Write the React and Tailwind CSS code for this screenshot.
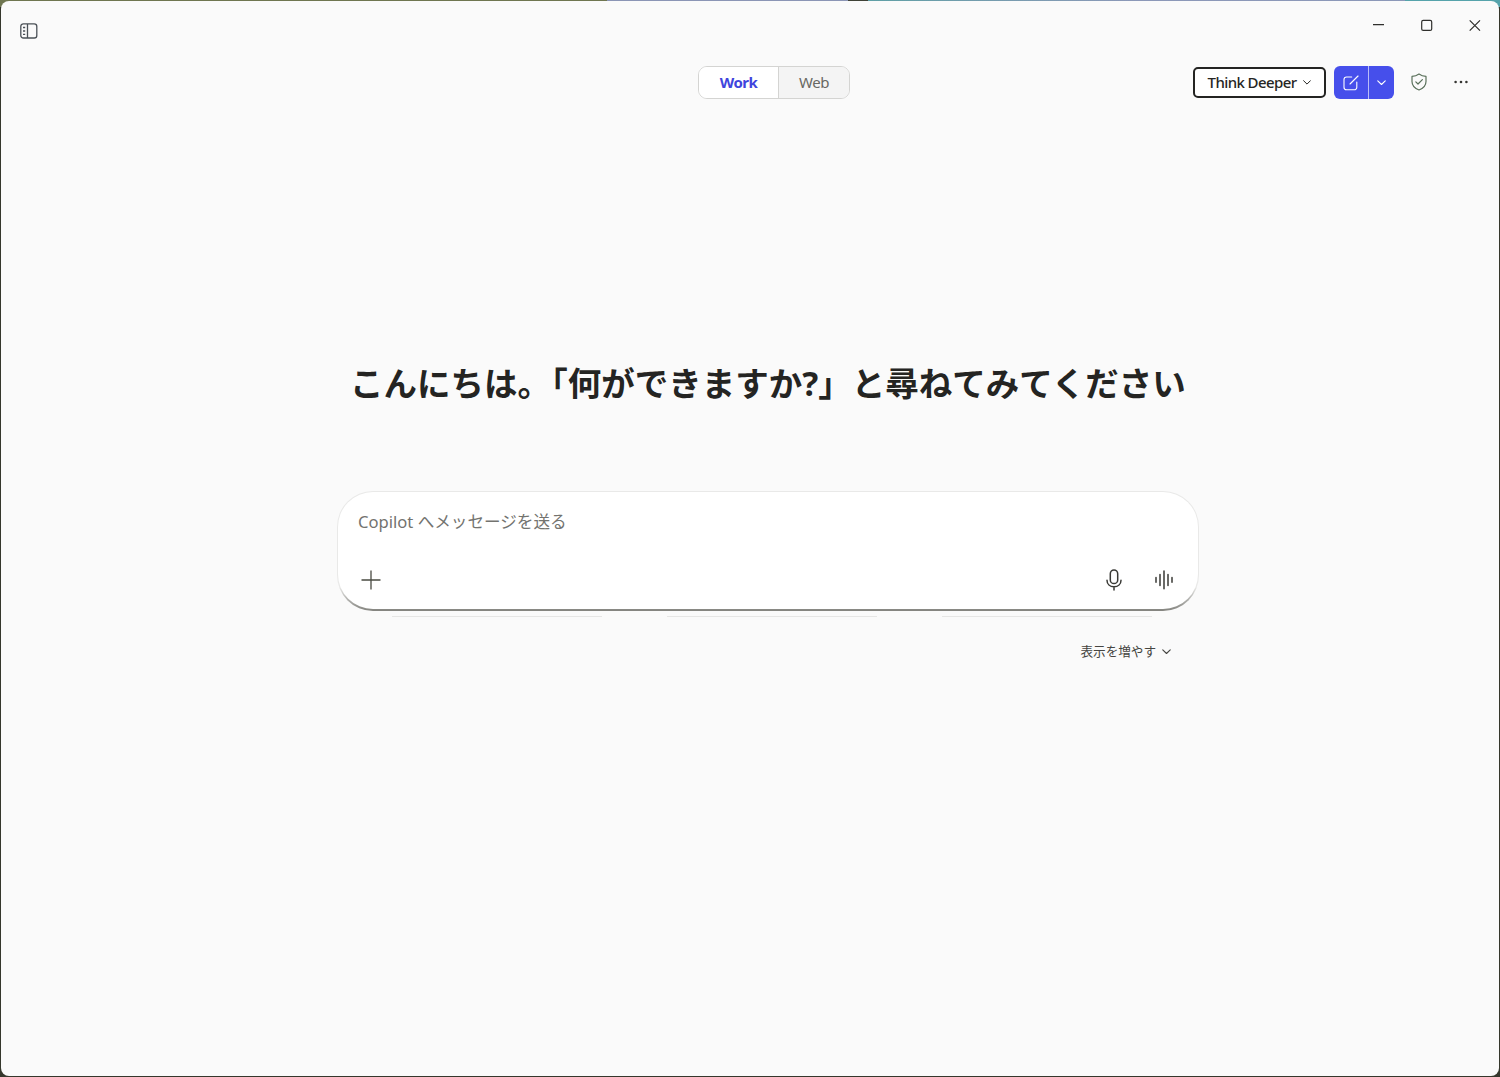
import { useState } from "react";

function SidebarIcon() {
  return (
    <svg width="18" height="16" viewBox="0 0 18 16" fill="none" stroke="#4b5157" strokeWidth="1.3">
      <rect x="0.8" y="0.8" width="16" height="14.2" rx="2.6" />
      <path d="M7.5 1v14" />
      <path d="M3 4.5h2.2M3 8h2.2M3 11.4h2.2" />
    </svg>
  );
}

function ChevronDown({ size = 8 }) {
  return (
    <svg width={size} height={size / 2 + 1} viewBox="0 0 8 5" fill="none" stroke="currentColor" strokeLinecap="round" strokeLinejoin="round">
      <path d="M0.6 0.7 4 4.1 7.4 0.7" />
    </svg>
  );
}

function ComposeIcon() {
  return (
    <svg width="16" height="16" viewBox="0 0 16 16" fill="none" stroke="currentColor" strokeWidth="1.1" strokeLinecap="round" strokeLinejoin="round">
      <path d="M8.7 2H3.6A2.6 2.6 0 0 0 1 4.6v7.6a2.6 2.6 0 0 0 2.6 2.6h7.6a2.6 2.6 0 0 0 2.6-2.6V7" />
      <path d="M15 1 7 9" />
    </svg>
  );
}

function ShieldIcon() {
  return (
    <svg className="block" width="16" height="18" viewBox="0 0 16 18" fill="none" stroke="#59705a" strokeWidth="1.2" strokeLinecap="round" strokeLinejoin="round">
      <path d="M8 1C10 2.5 12.3 3.3 15 3.4V8.5C15 12.5 12.5 15.3 8 17 3.5 15.3 1 12.5 1 8.5V3.4C3.7 3.3 6 2.5 8 1Z" />
      <path d="M4.8 8.8 7 11 11.4 6.6" />
    </svg>
  );
}

function MicIcon() {
  return (
    <svg width="16" height="22" viewBox="0 0 16 22" fill="none" stroke="#3a3a36" strokeWidth="1.5" strokeLinecap="round">
      <rect x="4.3" y="1" width="7.4" height="13.6" rx="3.7" />
      <path d="M1 11.2c0 4 3 6.5 7 6.5s7-2.5 7-6.5M8 17.7v3.3" />
    </svg>
  );
}

function WaveIcon() {
  return (
    <svg width="18" height="20" viewBox="0 0 18 20" fill="none" stroke="#3a3a36" strokeWidth="1.5" strokeLinecap="round">
      <path d="M1 7.6v4.6M5 4.5v11M9 1v17.8M13 4.5v11M17 7.6v4.6" />
    </svg>
  );
}

function WindowControls() {
  return (
    <div className="flex items-center gap-9 text-[#2f2f2c]">
      <button aria-label="最小化">
        <svg className="block" width="12" height="12" viewBox="0 0 12 12" stroke="currentColor" strokeWidth="1.2">
          <path d="M0 5.6h11" />
        </svg>
      </button>
      <button aria-label="最大化">
        <svg className="block" width="12" height="12" viewBox="0 0 12 12" fill="none" stroke="currentColor" strokeWidth="1.2">
          <rect x="0.7" y="1.4" width="10" height="10" rx="1.5" />
        </svg>
      </button>
      <button aria-label="閉じる">
        <svg className="block" width="12" height="12" viewBox="0 0 12 12" stroke="currentColor" strokeWidth="1.2">
          <path d="M0.7 1.3 11 11.6M11 1.3 0.7 11.6" />
        </svg>
      </button>
    </div>
  );
}

const TABS = ["Work", "Web"];

function ModeSwitch() {
  const [mode, setMode] = useState("Work");
  return (
    <div className="flex h-[33px] w-[152px] overflow-hidden rounded-[9px] border border-[#d4d4d2] text-[15px] tracking-[-0.5px]">
      {TABS.map((tab, i) => (
        <button
          key={tab}
          onClick={() => setMode(tab)}
          className={`flex items-center justify-center ${i === 0 ? "w-20 border-r border-[#d4d4d2]" : "flex-1"} ${
            mode === tab ? "bg-white font-bold text-[#3f45dd]" : "bg-[#f4f4f4] text-[#686863]"
          }`}
        >
          {tab}
        </button>
      ))}
    </div>
  );
}

function Header() {
  return (
    <header className="grid h-[33px] grid-cols-[1fr_152px_1fr] items-center pl-12">
      <div />
      <ModeSwitch />
      <div className="flex items-center justify-end pr-[31px]">
        <button className="mb-px flex h-[31px] w-[133px] items-center justify-center gap-[7px] rounded-[5px] border-2 border-[#242422] bg-white text-[15px] font-medium tracking-[-0.6px] text-[#262623]">
          <span className="pt-px whitespace-nowrap">Think Deeper</span>
          <ChevronDown />
        </button>
        <div className="ml-2 flex h-[33px] w-[60px] overflow-hidden rounded-md bg-[#464feb] text-white">
          <button aria-label="新しいチャット" className="flex w-[35px] items-center justify-center border-r border-[#b9bdf8]">
            <ComposeIcon />
          </button>
          <button aria-label="その他の作成オプション" className="flex flex-1 items-center justify-center">
            <ChevronDown size={9} />
          </button>
        </div>
        <button aria-label="保護" className="mb-px ml-[17px]">
          <ShieldIcon />
        </button>
        <button aria-label="その他" className="mb-px ml-[27px]">
          <svg className="block" width="14" height="4" viewBox="0 0 14 4" fill="#353532">
            <circle cx="1.6" cy="2" r="1.3" />
            <circle cx="7" cy="2" r="1.3" />
            <circle cx="12.4" cy="2" r="1.3" />
          </svg>
        </button>
      </div>
    </header>
  );
}

function Composer() {
  return (
    <div className="rounded-[36px] bg-linear-to-b from-[#e9e9e8] from-80% to-[#83837e] p-px pb-[2px]">
      <div className="flex h-[117px] flex-col justify-between rounded-[35px] bg-white pt-[18px] pr-[25px] pb-[18px] pl-5">
        <input
          type="text"
          placeholder="Copilot へメッセージを送る"
          className="h-6 w-full bg-transparent text-[16.6px] text-[#333330] outline-none placeholder:text-[#73736f]"
        />
        <div className="flex h-[22px] items-center justify-between">
          <button aria-label="追加" className="pl-[3px]">
            <svg className="block" width="20" height="20" viewBox="0 0 20 20" stroke="#4a4b42" strokeWidth="1.3">
              <path d="M10 0.5v19M0.5 10h19" />
            </svg>
          </button>
          <div className="flex items-center gap-[33px]">
            <button aria-label="音声入力">
              <MicIcon />
            </button>
            <button aria-label="音声チャット">
              <WaveIcon />
            </button>
          </div>
        </div>
      </div>
    </div>
  );
}

export default function App() {
  return (
    // デスクトップの壁紙がウィンドウの縁に少しだけ見える
    <div
      lang="ja"
      className="flex h-[1077px] w-[1500px] flex-col overflow-hidden bg-[#35372c] font-['Noto_Sans','Noto_Sans_CJK_JP',sans-serif]"
    >
      <div className="flex h-[7px] shrink-0">
        <div className="w-[607px] bg-[#6f7650]" />
        <div className="w-[241px] bg-[#8b95b5]" />
        <div className="w-5 bg-[#3f4237]" />
        <div className="w-[537px] bg-linear-to-r from-[#5e9fa5] via-[#8c98b8] to-[#8c98b8]" />
        <div className="flex-1 bg-[#55a3ab]" />
      </div>
      <div className="mx-px -mt-[6px] mb-px flex flex-1 flex-col overflow-hidden rounded-lg bg-[#fafafa]">
        <div className="flex h-[65px] items-start justify-between pt-[18px] pr-[18px] pl-[19px]">
          <button aria-label="サイドバー" className="mt-1">
            <SidebarIcon />
          </button>
          <WindowControls />
        </div>
        <Header />

        <main className="ml-[336px] flex w-[862px] flex-col">
          <h1 className="mt-[259px] h-[50px] pl-[13px] text-[33.5px] leading-[50px] font-bold whitespace-nowrap text-[#242422]">
            こんにちは。「何ができますか?」と尋ねてみてください
          </h1>
          <div className="mt-[83px]">
            <Composer />
          </div>
          {/* 折りたたまれた提案カードの下端 */}
          <div className="mt-[5px] flex gap-[65px] pl-[55px]">
            <div className="h-px w-[210px] bg-[#e6e6e5]" />
            <div className="h-px w-[210px] bg-[#e6e6e5]" />
            <div className="h-px w-[210px] bg-[#e6e6e5]" />
          </div>
          <button className="mt-[25px] mr-7 flex h-5 items-center gap-[6px] self-end text-[12.6px] text-[#454541]">
            表示を増やす
            <ChevronDown size={9} />
          </button>
        </main>
      </div>
    </div>
  );
}
